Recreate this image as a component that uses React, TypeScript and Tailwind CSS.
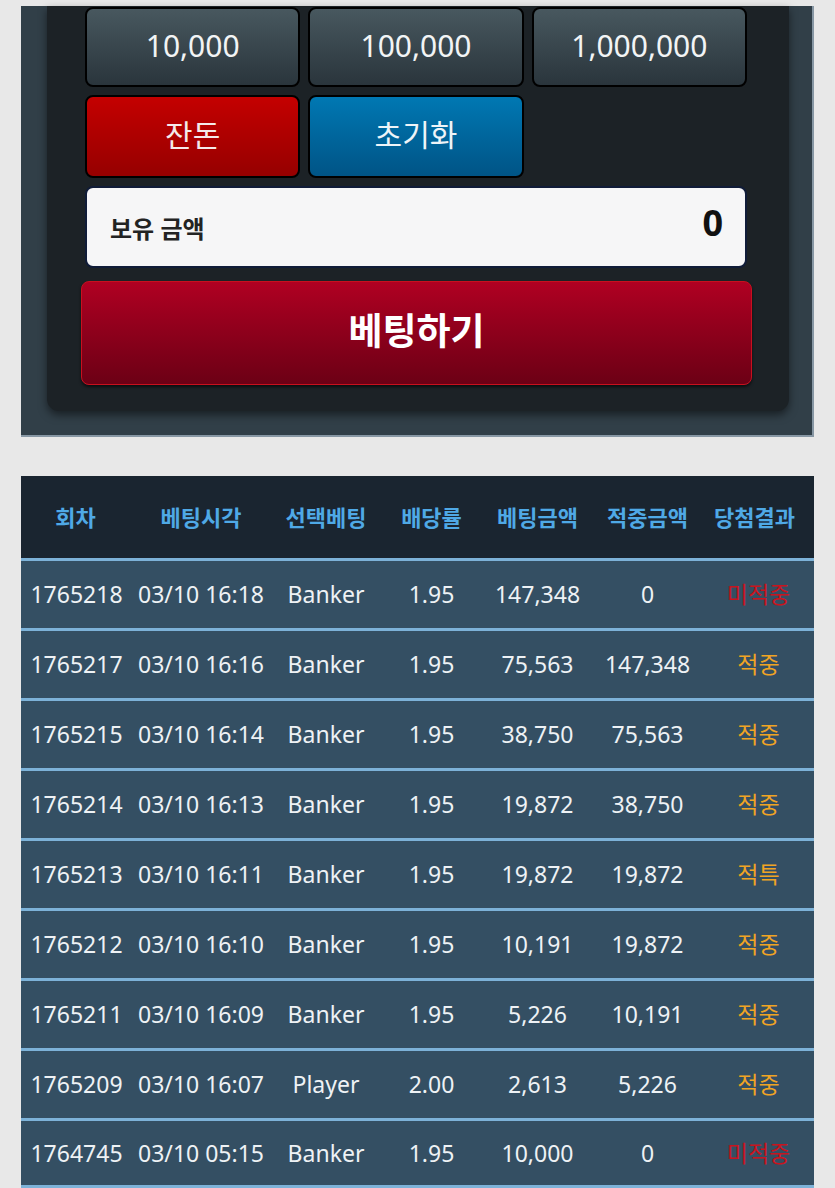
import React from "react";

const rows = [
  ["1765218", "03/10 16:18", "Banker", "1.95", "147,348", "0", "미적중"],
  ["1765217", "03/10 16:16", "Banker", "1.95", "75,563", "147,348", "적중"],
  ["1765215", "03/10 16:14", "Banker", "1.95", "38,750", "75,563", "적중"],
  ["1765214", "03/10 16:13", "Banker", "1.95", "19,872", "38,750", "적중"],
  ["1765213", "03/10 16:11", "Banker", "1.95", "19,872", "19,872", "적특"],
  ["1765212", "03/10 16:10", "Banker", "1.95", "10,191", "19,872", "적중"],
  ["1765211", "03/10 16:09", "Banker", "1.95", "5,226", "10,191", "적중"],
  ["1765209", "03/10 16:07", "Player", "2.00", "2,613", "5,226", "적중"],
  ["1764745", "03/10 05:15", "Banker", "1.95", "10,000", "0", "미적중"],
];

const headers = ["회차", "베팅시각", "선택베팅", "배당률", "베팅금액", "적중금액", "당첨결과"];

const gridCols = "grid grid-cols-[109px_142px_108px_103px_109px_111px_111px]";

export default function App() {
  return (
    <div
      className="w-[835px] h-[1188px] overflow-hidden bg-[#e8e8e8]"
      style={{ fontFamily: '"Noto Sans", "Noto Sans CJK KR", sans-serif' }}
    >
      <div className="h-[6px]" />
      {/* Outer panel */}
      <div className="ml-[21px] w-[793px] bg-[#313f48] border-b-2 border-r-2 border-[#8797a4] pl-[26px] pb-[24px]">
        <div className="w-[742px] bg-[#1c2226] rounded-b-xl shadow-[0_4px_8px_rgba(0,0,0,0.5)] pt-px pb-[26px]">
          <div className="pl-[38px] w-[700px]">
            <div className="grid grid-cols-3 gap-x-2 gap-y-2 w-[662px]">
              {["10,000", "100,000", "1,000,000"].map((t) => (
                <div
                  key={t}
                  className="h-[80px] rounded-lg border-2 border-black bg-gradient-to-b from-[#48585f] to-[#2a353c] flex items-center justify-center text-[#f2f4f5] text-[30px] pb-1"
                >
                  {t}
                </div>
              ))}
              <div className="h-[83px] rounded-lg border-2 border-black bg-gradient-to-b from-[#c40000] to-[#960000] flex items-center justify-center text-[#f4eaea] text-[30px] pb-1">
                잔돈
              </div>
              <div className="h-[83px] rounded-lg border-2 border-black bg-gradient-to-b from-[#0078b3] to-[#005486] flex items-center justify-center text-[#eef4f8] text-[30px] pb-1">
                초기화
              </div>
              <div />
            </div>
            <div className="mt-2 w-[662px] h-[82px] rounded-lg bg-[#f6f6f7] border-2 border-[#101c38] flex items-center justify-between pl-[23px] pr-[22px]">
              <span className="text-[24px] font-bold text-[#232323] mt-1">보유 금액</span>
              <span className="text-[36px] font-bold text-[#111] -mt-2">0</span>
            </div>
          </div>
          <div className="pl-[34px] mt-[13px]">
            <div className="w-[671px] h-[104px] rounded-lg border border-[#c8101e] bg-gradient-to-b from-[#b00022] to-[#6c0015] shadow-[0_2px_3px_rgba(0,0,0,0.6)] flex items-center justify-center text-white text-[37px] font-bold pb-1">
              베팅하기
            </div>
          </div>
        </div>
      </div>

      {/* Table */}
      <div className="ml-[21px] mt-[39px] w-[793px]">
        <div className={`${gridCols} h-[82px] bg-[#1a2530] items-center`}>
          {headers.map((h, i) => (
            <div
              key={h}
              className={`text-center text-[22px] font-bold text-[#4fa9e6] ${i === 6 ? "pr-[8px]" : ""}`}
            >
              {h}
            </div>
          ))}
        </div>
        {rows.map((r, ri) => (
          <div
            key={ri}
            className={`${gridCols} h-[70px] bg-[#344f63] border-t-[3px] border-[#7db2d8] items-center ${
              ri === rows.length - 1 ? "border-b-[3px]" : ""
            }`}
          >
            {r.map((c, ci) => {
              const isResult = ci === 6;
              const color = isResult
                ? c === "미적중"
                  ? "text-[#c8141e]"
                  : "text-[#f0a424]"
                : "text-[#eef2f5]";
              return (
                <div
                  key={ci}
                  className={`text-center text-[23px] ${color} ${ci === 0 ? "pl-[2px]" : ""} ${ci === 6 ? "text-[22px]" : ""}`}
                >
                  {c}
                </div>
              );
            })}
          </div>
        ))}
      </div>
    </div>
  );
}
